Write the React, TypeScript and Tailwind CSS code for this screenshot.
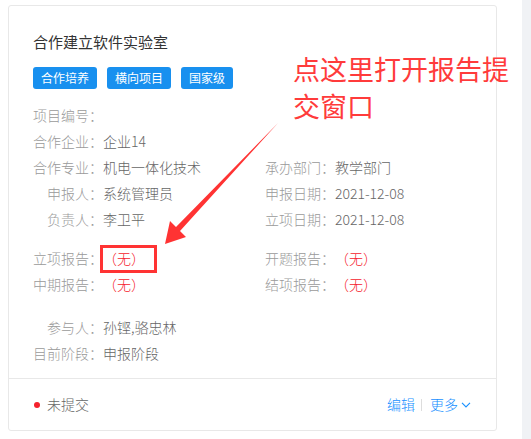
import React from "react";

const Row = ({ label, value, red }: { label: string; value?: string; red?: boolean }) => (
  <div className="flex h-[26px] items-center leading-[26px] text-[14px]">
    <span className="w-[70px] text-right text-[#9a9a9a] whitespace-nowrap">{label}</span>
    <span className={red ? "text-[#f5222d] whitespace-nowrap" : "text-[#666666] whitespace-nowrap"}>{value}</span>
  </div>
);

const Pair = ({ children }: { children: React.ReactNode }) => (
  <div className="grid grid-cols-[232px_1fr]">{children}</div>
);

export default function App() {
  return (
    <div className="relative flex w-[531px] h-[439px] bg-white overflow-hidden font-light font-['Noto_Sans_CJK_SC','Noto_Sans',sans-serif]">
      <div className="w-[522px] pl-[8px] pt-[5px]">
        <div className="flex h-[426px] w-[489px] flex-col rounded-[3px] border border-[#e8e8e8] bg-white">
          <div className="px-[24px] pt-[25px]">
            <div className="h-[22px] text-[15px] font-normal leading-[22px] text-[#333333]">合作建立软件实验室</div>
            <div className="mt-[14px] flex gap-[10px]">
              {["合作培养", "横向项目", "国家级"].map((t) => (
                <span key={t} className="h-[22px] rounded-[3px] bg-[#1890ef] px-[8px] text-[12px] font-normal leading-[22px] text-white">
                  {t}
                </span>
              ))}
            </div>
            <div className="mt-[13px]">
              <Pair>
                <Row label="项目编号：" />
                <div />
              </Pair>
              <Pair>
                <Row label="合作企业：" value="企业14" />
                <div />
              </Pair>
              <Pair>
                <Row label="合作专业：" value="机电一体化技术" />
                <Row label="承办部门：" value="教学部门" />
              </Pair>
              <Pair>
                <Row label="申报人：" value="系统管理员" />
                <Row label="申报日期：" value="2021-12-08" />
              </Pair>
              <Pair>
                <Row label="负责人：" value="李卫平" />
                <Row label="立项日期：" value="2021-12-08" />
              </Pair>
            </div>
            <div className="mt-[13px]">
              <Pair>
                <Row label="立项报告：" value="（无）" red />
                <Row label="开题报告：" value="（无）" red />
              </Pair>
              <Pair>
                <Row label="中期报告：" value="（无）" red />
                <Row label="结项报告：" value="（无）" red />
              </Pair>
            </div>
            <div className="mt-[17px]">
              <Row label="参与人：" value="孙铿,骆忠林" />
              <Row label="目前阶段：" value="申报阶段" />
            </div>
          </div>
          <div className="flex-1" />
          <div className="flex h-[52px] items-center justify-between border-t border-[#e8e8e8] pl-[25px] pr-[25px] text-[14px]">
            <div className="flex items-center">
              <span className="h-[6px] w-[6px] rounded-full bg-[#f5222d]" />
              <span className="ml-[7px] text-[#666666]">未提交</span>
            </div>
            <div className="flex items-center text-[#1890ff]">
              <span>编辑</span>
              <span className="mx-[6px] h-[12px] w-px bg-[#dddddd]" />
              <span className="ml-[2px]">更多</span>
              <svg className="ml-[3px]" width="10" height="6" viewBox="0 0 10 6" fill="none">
                <polyline points="1,0.8 5,5 9,0.8" stroke="#1890ff" strokeWidth="1.1" />
              </svg>
            </div>
          </div>
        </div>
      </div>
      <div className="flex-1 bg-[#f0f2f5]" />

      {/* annotation overlay */}
      <div className="absolute left-[100px] top-[245px] h-[28px] w-[57px] border-[3px] border-[#ff3333]" />
      <svg className="absolute left-0 top-0" width="531" height="439" viewBox="0 0 531 439">
        <polygon points="278,123 180,231 186,237 165,244 170,221 176,227" fill="#ff3333" />
      </svg>
      <div className="absolute left-[293px] top-[50px] w-[225px] text-[27px] font-normal leading-[37px] text-[#ff3b3b]">
        点这里打开报告提交窗口
      </div>
    </div>
  );
}
